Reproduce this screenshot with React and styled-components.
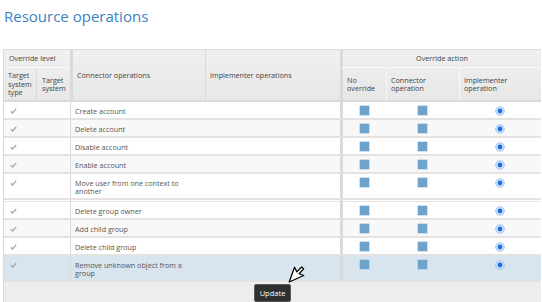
import React from 'react';
import styled, { createGlobalStyle } from 'styled-components';

const Global = createGlobalStyle`
  html, body { margin: 0; padding: 0; background: #fff; }
  body {
    font-family: "Open Sans", "Liberation Sans", sans-serif;
    width: 542px; height: 302px; overflow: hidden;
  }
  * { box-sizing: border-box; }
`;

const COLS = '32px 34px 135px 135px 46px 73px 82px';

const Page = styled.div`
  position: relative;
  width: 542px;
  height: 302px;
  padding: 0 1px 0 3px;
`;

const Title = styled.h1`
  margin: 0 0 23px 0;
  padding: 6px 0 0 1px;
  font-weight: 400;
  font-size: 15px;
  line-height: 20px;
  color: #3a82c2;
`;

const Table = styled.div`
  width: 538px;
  border-left: 1px solid #d9d9d9;
`;

const Header = styled.div`
  display: grid;
  grid-template-columns: ${COLS};
  grid-template-rows: 18px 32px;
  background: linear-gradient(#f0f0f0, #e7e7e7);
  border-top: 1px solid #dcdcdc;
  border-bottom: 2px solid #dadada;
`;

const dividers = {
  none: 'none',
  light: '1px solid #f8f8f8',
  gray: '1px solid #d9d9d9',
  heavy: '3px solid #d9d9d9',
};

const HeadCell = styled.div`
  grid-column: ${(p) => p.$col};
  grid-row: ${(p) => p.$row};
  display: flex;
  align-items: center;
  justify-content: ${(p) => (p.$center ? 'center' : 'flex-start')};
  padding: 0 4px 0 ${(p) => p.$pl || 4}px;
  border-left: ${(p) => dividers[p.$div || 'light']};
  border-bottom: ${(p) => (p.$under ? '1px solid #f8f8f8' : 'none')};
  font-size: 7.2px;
  line-height: 8.5px;
  color: #444;
`;

const tones = { white: '#ffffff', alt: '#f8f8f8', sel: '#d8e5ef' };

const Row = styled.div`
  display: grid;
  grid-template-columns: ${COLS};
  background: ${(p) => tones[p.$tone]};
  border-bottom: ${(p) => (p.$gap ? '1px' : '2px')} solid #e3e3e3;
`;

const Cell = styled.div`
  padding: ${(p) => (p.$empty ? '0' : '4.5px 3px 3.5px')};
  height: ${(p) => (p.$empty ? '1px' : 'auto')};
  padding-left: ${(p) => (p.$empty ? 0 : p.$pl || 3)}px;
  border-left: ${(p) => dividers[p.$div || 'none']};
  display: flex;
  justify-content: ${(p) => (p.$center ? 'center' : 'flex-start')};
  align-items: flex-start;
  font-size: 7.2px;
  line-height: 8px;
  color: #555;
`;

const OpText = styled.span`
  max-width: 112px;
`;

const Square = styled.span`
  display: block;
  width: 9px;
  height: 9px;
  margin: -0.5px 0;
  background: #6ea4cb;
  box-shadow: 0 0 0 0.5px #9cc2de;
`;

const Footer = styled.div`
  height: 20px;
  background: #ededed;
  border-left: 1px solid #d9d9d9;
  width: 538px;
  margin-left: -1px;
  display: flex;
  justify-content: center;
  padding-top: 2px;
`;

const Button = styled.button`
  height: 18px;
  padding: 0 5px;
  background: #2f2f2f;
  border: 1px solid #5a5a5a;
  border-radius: 2px;
  color: #fff;
  font-family: "Open Sans", "Liberation Sans", sans-serif;
  font-size: 7.5px;
  line-height: 16px;
`;

const Cursor = styled.svg`
  position: absolute;
  left: 286px;
  top: 259px;
`;

const Check = () => (
  <svg width="7" height="6" viewBox="0 0 7 6" style={{ marginTop: 1, marginLeft: 3 }}>
    <path d="M0.8 3.2 L2.6 5 L6.2 0.8" fill="none" stroke="#a5a5a5" strokeWidth="1.3" />
  </svg>
);

const Radio = () => (
  <svg width="10" height="10" viewBox="0 0 10 10" style={{ margin: '-1px 0' }}>
    <circle cx="5" cy="5" r="4.3" fill="#d3e5fb" stroke="#93bdf0" strokeWidth="0.8" />
    <circle cx="5" cy="5" r="2.4" fill="#1b6fe6" />
  </svg>
);

const rows = [
  { label: 'Create account', tone: 'white' },
  { label: 'Delete account', tone: 'alt' },
  { label: 'Disable account', tone: 'white' },
  { label: 'Enable account', tone: 'alt' },
  { label: 'Move user from one context to another', tone: 'white' },
  { gap: true, tone: 'white' },
  { label: 'Delete group owner', tone: 'white' },
  { label: 'Add child group', tone: 'alt' },
  { label: 'Delete child group', tone: 'white' },
  { label: 'Remove unknown object from a group', tone: 'sel' },
];

export default function App() {
  return (
    <Page>
      <Global />
      <Title>Resource operations</Title>
      <Table>
        <Header>
          <HeadCell $col="1 / 3" $row="1" $div="none" $under $pl={5}>Override level</HeadCell>
          <HeadCell $col="1" $row="2" $div="none">Target<br />system<br />type</HeadCell>
          <HeadCell $col="2" $row="2" $div="gray" $pl={5}>Target<br />system</HeadCell>
          <HeadCell $col="3" $row="1 / 3" $div="heavy">Connector operations</HeadCell>
          <HeadCell $col="4" $row="1 / 3" $div="gray">Implementer operations</HeadCell>
          <HeadCell $col="5 / 8" $row="1" $div="heavy" $under $center>Override action</HeadCell>
          <HeadCell $col="5" $row="2" $div="heavy">No<br />override</HeadCell>
          <HeadCell $col="6" $row="2" $div="light">Connector<br />operation</HeadCell>
          <HeadCell $col="7" $row="2" $div="light">Implementer<br />operation</HeadCell>
        </Header>
        {rows.map((r, i) =>
          r.gap ? (
            <Row key={i} $tone={r.tone} $gap>
              <Cell $empty />
              <Cell $empty />
              <Cell $empty $div="gray" />
              <Cell $empty />
              <Cell $empty $div="heavy" />
              <Cell $empty />
              <Cell $empty />
            </Row>
          ) : (
            <Row key={i} $tone={r.tone}>
              <Cell><Check /></Cell>
              <Cell />
              <Cell $div="gray" $pl={4}><OpText>{r.label}</OpText></Cell>
              <Cell />
              <Cell $div="heavy" $center><Square /></Cell>
              <Cell $center><Square /></Cell>
              <Cell $center><Radio /></Cell>
            </Row>
          )
        )}
        <Footer>
          <Button>Update</Button>
        </Footer>
      </Table>
      <Cursor width="21" height="24" viewBox="0 0 20 23">
        <g transform="translate(3 22) rotate(-160) scale(-1 1) translate(-1 -1)">
          <path
            d="M1 1 L1 16 L4.6 12.6 L7.3 18.6 L9.8 17.5 L7.2 11.6 L12 11.6 Z"
            fill="#fff"
            stroke="#000"
            strokeWidth="1.2"
            strokeLinejoin="round"
          />
        </g>
      </Cursor>
    </Page>
  );
}
